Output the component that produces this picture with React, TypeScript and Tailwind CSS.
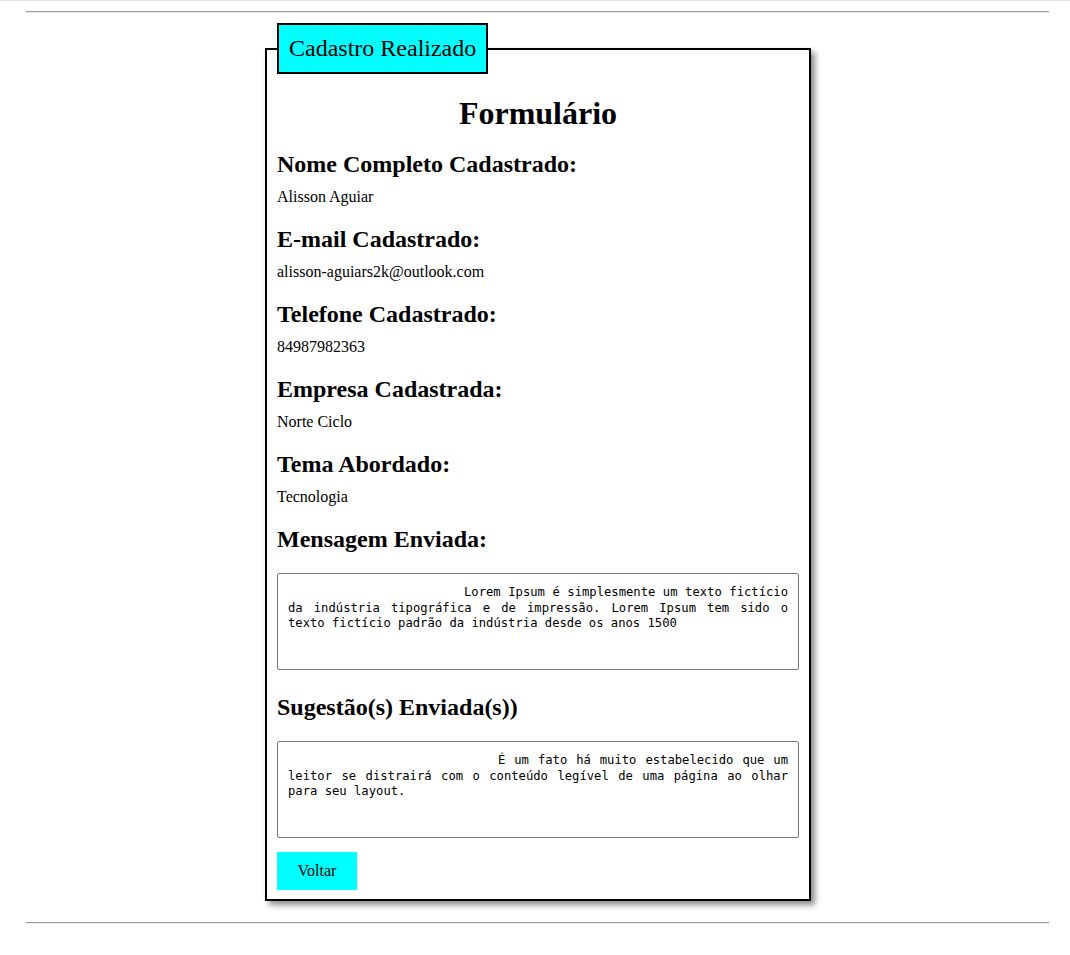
import React from 'react'

const campos = [
  { label: 'Nome Completo Cadastrado:', value: 'Alisson Aguiar' },
  { label: 'E-mail Cadastrado:', value: 'alisson-aguiars2k@outlook.com' },
  { label: 'Telefone Cadastrado:', value: '84987982363' },
  { label: 'Empresa Cadastrada:', value: 'Norte Ciclo' },
  { label: 'Tema Abordado:', value: 'Tecnologia' },
]

const mensagem =
  'Lorem Ipsum é simplesmente um texto fictício da indústria tipográfica e de impressão. Lorem Ipsum tem sido o texto fictício padrão da indústria desde os anos 1500'

const sugestao =
  'É um fato há muito estabelecido que um leitor se distrairá com o conteúdo legível de uma página ao olhar para seu layout.'

function Caixa({ value, indent }: { value: string; indent: 'a' | 'b' }) {
  return (
    <textarea
      readOnly
      value={value}
      className={`block w-full h-[97px] resize-none border border-[#7a7a7a] rounded-[2px] px-[10px] pt-[11px] text-justify text-black font-['DejaVu_Sans_Mono',monospace] text-[12.2px] leading-[15.6px] outline-none ${
        indent === 'a' ? 'indent-[176px]' : 'indent-[210px]'
      }`}
    />
  )
}

export default function App() {
  return (
    <div className="min-h-screen bg-white border-t border-[#e2e2e2] font-['Liberation_Serif',serif] text-black">
      <hr className="mt-[10px] ml-[26px] mr-[21px] border-t border-b border-t-[#9a9a9a] border-b-[#eeeeee]" />

      <div className="flex justify-center pl-[6px] mt-[10px]">
        <fieldset className="w-[546px] border-2 border-black px-[10px] pb-[9px] shadow-[4px_4px_6px_rgba(0,0,0,0.45)]">
          <legend className="bg-[#00ffff] border-2 border-black px-[10px] py-[9px] text-[24px] leading-[29px]">
            Cadastro Realizado
          </legend>

          <h1 className="mt-[21px] mb-[19px] text-center text-[32px] leading-[36px] font-bold">Formulário</h1>

          {campos.map((c) => (
            <div key={c.label}>
              <h2 className="mb-[10px] text-[24px] leading-[28px] font-bold">{c.label}</h2>
              <p className="mb-[19px] text-[16px] leading-[18px]">{c.value}</p>
            </div>
          ))}

          <h2 className="mb-[20px] text-[24px] leading-[28px] font-bold">Mensagem Enviada:</h2>
          <Caixa value={mensagem} indent="a" />

          <h2 className="mt-[23px] mb-[20px] text-[24px] leading-[28px] font-bold">Sugestão(s) Enviada(s))</h2>
          <Caixa value={sugestao} indent="b" />

          <button className="mt-[14px] w-[80px] h-[38px] bg-[#00ffff] text-[16px] text-black">Voltar</button>
        </fieldset>
      </div>

      <hr className="mt-[21px] ml-[26px] mr-[21px] border-t border-b border-t-[#9a9a9a] border-b-[#eeeeee]" />
    </div>
  )
}
